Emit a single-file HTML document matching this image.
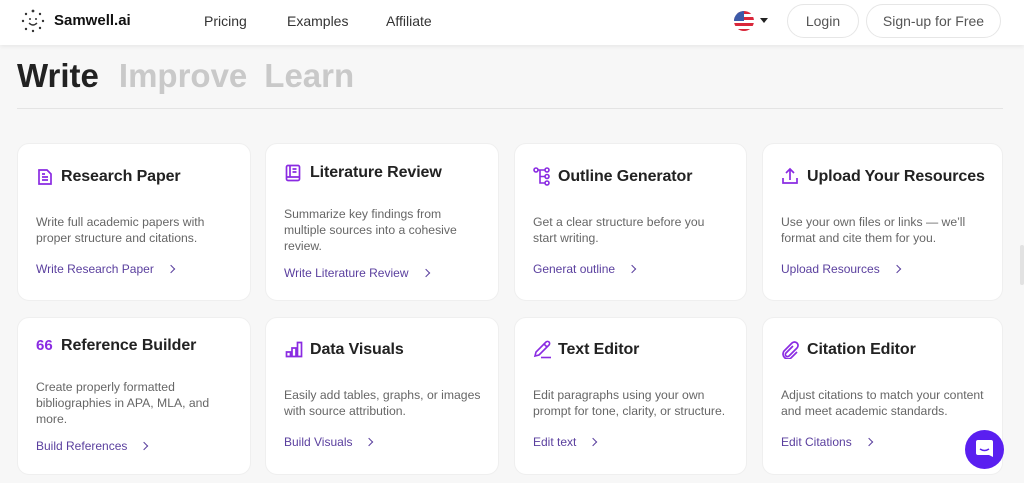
<!DOCTYPE html>
<html><head><meta charset="utf-8"><style>
*{margin:0;padding:0;box-sizing:border-box}
body{width:1024px;height:483px;overflow:hidden;background:#f7f7f7;font-family:"Liberation Sans",sans-serif;position:relative}
.hdr{position:absolute;left:0;top:0;width:1024px;height:45px;background:#fff;box-shadow:0 2px 4px rgba(0,0,0,.06)}
.a{position:absolute;white-space:nowrap}
.nav{font-size:14px;color:#333;top:13px}
.btn{position:absolute;top:4px;height:34px;border:1px solid #e6e6e6;border-radius:17px;font-size:14px;color:#555;display:flex;align-items:center;justify-content:center;background:#fff}
.card{position:absolute;background:#fff;border-radius:12px;border:1px solid #efefef}
.t{position:absolute;font-size:16px;font-weight:bold;color:#222;white-space:nowrap;letter-spacing:-0.1px;margin-top:1px}
.d{position:absolute;font-size:12.2px;line-height:16px;color:#666;}
.l{position:absolute;font-size:12px;color:#5a3f9e;white-space:nowrap}
.l:after{content:"";display:inline-block;width:5px;height:5px;border-right:1.6px solid #5a3f9e;border-top:1.6px solid #5a3f9e;transform:rotate(45deg);margin-left:14px;position:relative;top:-1px}
svg.i{position:absolute}
</style></head><body>
<div class="hdr"></div>
<svg class="a" style="left:19px;top:8px" width="28" height="26" viewBox="0 0 28 26"><g fill="#333"><circle cx="14" cy="3" r="1.4"/><circle cx="7" cy="6" r="1.2"/><circle cx="21" cy="6" r="1.2"/><circle cx="4" cy="13" r="1.2"/><circle cx="24" cy="13" r="1.2"/><circle cx="7" cy="21" r="1.2"/><circle cx="14" cy="23" r="1.2"/><circle cx="21" cy="20" r="1.2"/><circle cx="11" cy="11" r="1"/><circle cx="17" cy="11" r="1"/></g><path d="M10 15q4 4 8 0" stroke="#333" stroke-width="1.4" fill="none"/></svg>
<div class="a" style="left:54px;top:12px;font-size:15px;font-weight:bold;color:#111">Samwell.ai</div>
<div class="a nav" style="left:204px">Pricing</div>
<div class="a nav" style="left:287px">Examples</div>
<div class="a nav" style="left:386px">Affiliate</div>
<svg class="a" style="left:734px;top:11px" width="20" height="20" viewBox="0 0 20 20"><clipPath id="c"><circle cx="10" cy="10" r="10"/></clipPath><g clip-path="url(#c)"><rect width="20" height="20" fill="#fff"/><g fill="#d9273a"><rect y="0" width="20" height="3"/><rect y="6" width="20" height="3"/><rect y="12" width="20" height="3"/><rect y="18" width="20" height="3"/></g><rect width="10" height="10" fill="#3c5aa8"/></g></svg>
<div class="a" style="left:760px;top:18px;width:0;height:0;border-left:4px solid transparent;border-right:4px solid transparent;border-top:5px solid #222"></div>
<div class="btn" style="left:787px;width:72px">Login</div>
<div class="btn" style="left:866px;width:135px">Sign-up for Free</div>
<div class="a" style="left:17px;top:57px;font-size:33px;font-weight:bold;color:#222">Write<span style="color:#c9c9c9;margin-left:20px">Improve</span><span style="color:#c9c9c9;margin-left:17px">Learn</span></div>
<div class="a" style="left:17px;top:108px;width:986px;height:1px;background:#e4e4e4"></div>

<div class="card" style="left:17px;top:143px;width:234px;height:158px"></div>
<div class="card" style="left:265px;top:143px;width:234px;height:158px"></div>
<div class="card" style="left:514px;top:143px;width:233px;height:158px"></div>
<div class="card" style="left:762px;top:143px;width:241px;height:158px"></div>
<div class="card" style="left:17px;top:317px;width:234px;height:158px"></div>
<div class="card" style="left:265px;top:317px;width:234px;height:158px"></div>
<div class="card" style="left:514px;top:317px;width:233px;height:158px"></div>
<div class="card" style="left:762px;top:317px;width:241px;height:158px"></div>

<svg class="i" style="left:37px;top:168px" width="16" height="18" viewBox="0 0 16 18" fill="none" stroke="#8a2be2" stroke-width="1.7"><path d="M2 2h8l4 4v10H2z"/><path d="M5 9h6M5 12h6M5 6h3"/></svg>
<div class="t" style="left:61px;top:167px">Research Paper</div>
<div class="d" style="left:36px;top:214px">Write full academic papers with<br>proper structure and citations.</div>
<div class="l" style="left:36px;top:262px">Write Research Paper</div>

<svg class="i" style="left:285px;top:164px" width="16" height="18" viewBox="0 0 16 18" fill="none" stroke="#8a2be2" stroke-width="1.7"><rect x="1.5" y="1.5" width="13" height="15" rx="1.5"/><path d="M1.5 13h13M5 1.5v11M7.5 5h4M7.5 8h4"/></svg>
<div class="t" style="left:310px;top:163px">Literature Review</div>
<div class="d" style="left:284px;top:206px">Summarize key findings from<br>multiple sources into a cohesive<br>review.</div>
<div class="l" style="left:284px;top:266px">Write Literature Review</div>

<svg class="i" style="left:533px;top:167px" width="18" height="19" viewBox="0 0 18 19" fill="none" stroke="#8a2be2" stroke-width="1.6"><circle cx="3" cy="3" r="2"/><circle cx="14" cy="3" r="2"/><circle cx="14" cy="9.5" r="2"/><circle cx="14" cy="16" r="2"/><path d="M5 3h7M7 3v13h5M7 9.5h5"/></svg>
<div class="t" style="left:558px;top:167px">Outline Generator</div>
<div class="d" style="left:533px;top:214px">Get a clear structure before you<br>start writing.</div>
<div class="l" style="left:533px;top:262px">Generat outline</div>

<svg class="i" style="left:781px;top:167px" width="18" height="18" viewBox="0 0 18 18" fill="none" stroke="#8a2be2" stroke-width="1.7"><path d="M2 11v5h14v-5M9 13V2M5 6l4-4 4 4"/></svg>
<div class="t" style="left:807px;top:167px">Upload Your Resources</div>
<div class="d" style="left:781px;top:214px">Use your own files or links — we’ll<br>format and cite them for you.</div>
<div class="l" style="left:781px;top:262px">Upload Resources</div>

<div class="a" style="left:36px;top:337px;font-size:15px;font-weight:bold;color:#8a2be2">66</div>
<div class="t" style="left:61px;top:336px">Reference Builder</div>
<div class="d" style="left:36px;top:379px">Create properly formatted<br>bibliographies in APA, MLA, and<br>more.</div>
<div class="l" style="left:36px;top:439px">Build References</div>

<svg class="i" style="left:285px;top:341px" width="18" height="17" viewBox="0 0 18 17" fill="none" stroke="#8a2be2" stroke-width="1.7"><path d="M1.5 11h4v4.5h-4zM7 7h4v8.5H7zM12.5 1.5h4v14h-4z"/></svg>
<div class="t" style="left:310px;top:340px">Data Visuals</div>
<div class="d" style="left:284px;top:387px">Easily add tables, graphs, or images<br>with source attribution.</div>
<div class="l" style="left:284px;top:435px">Build Visuals</div>

<svg class="i" style="left:533px;top:340px" width="20" height="19" viewBox="0 0 20 19" fill="none" stroke="#8a2be2" stroke-width="1.6"><path d="M2 16l1-4L13 2a2 2 0 0 1 3 3L6 15z M11 4l3 3"/><path d="M8 17.5h10"/></svg>
<div class="t" style="left:558px;top:340px">Text Editor</div>
<div class="d" style="left:533px;top:387px">Edit paragraphs using your own<br>prompt for tone, clarity, or structure.</div>
<div class="l" style="left:533px;top:435px">Edit text</div>

<svg class="i" style="left:781px;top:340px" width="18" height="19" viewBox="0 0 18 19" fill="none" stroke="#8a2be2" stroke-width="1.7"><path d="M12 6l-7 7a2 2 0 0 0 3 3l8-8a3.5 3.5 0 0 0-5-5L3 11a5 5 0 0 0 7 7l6-6"/></svg>
<div class="t" style="left:807px;top:340px">Citation Editor</div>
<div class="d" style="left:781px;top:387px">Adjust citations to match your content<br>and meet academic standards.</div>
<div class="l" style="left:781px;top:435px">Edit Citations</div>

<div class="a" style="left:965px;top:430px;width:39px;height:39px;border-radius:50%;background:#5a1ff0"></div>
<svg class="a" style="left:975px;top:439px" width="19" height="21" viewBox="0 0 19 21"><path d="M3 1h13a2 2 0 0 1 2 2v15l-4-2H3a2 2 0 0 1-2-2V3a2 2 0 0 1 2-2z" fill="#fff"/><path d="M5 10q4.5 3 9 0" stroke="#5a1ff0" stroke-width="1.5" fill="none"/></svg>
<div class="a" style="left:1020px;top:245px;width:4px;height:40px;border-radius:2px;background:#e2e2e2"></div>
</body></html>
